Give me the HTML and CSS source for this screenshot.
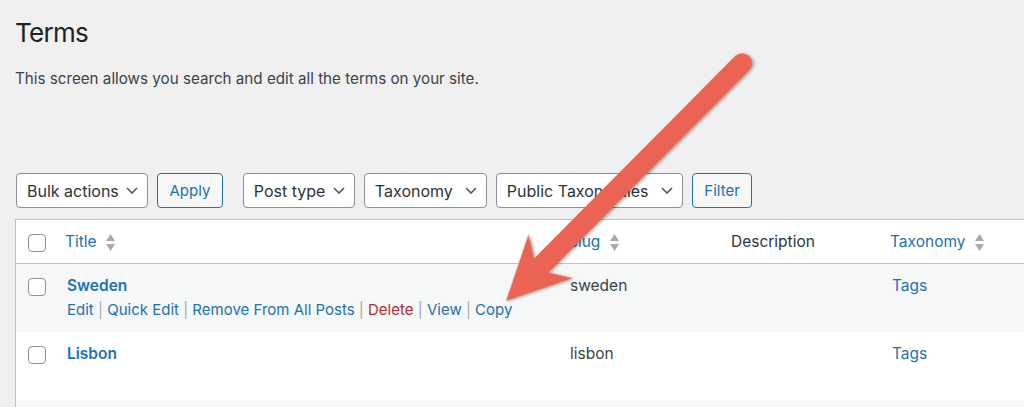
FILE: index.html
```html
<!DOCTYPE html>
<html lang="en">
<head>
    <meta charset="UTF-8">
    <meta name="viewport" content="width=device-width, initial-scale=1.0">
    <title>Terms</title>
    <link rel="stylesheet" href="styles.css">
</head>
<body>
    <div class="wrap">
        <h1>Terms</h1>
        <p class="intro">This screen allows you search and edit all the terms on your site.</p>

        <div class="tablenav">
            <div class="actions">
                <div class="select select-bulk">
                    <span>Bulk actions</span>
                    <svg class="chevron" width="12" height="7" viewBox="0 0 12 7"><path d="M1 1l5 5 5-5"/></svg>
                </div>
                <button class="button">Apply</button>
            </div>
            <div class="actions">
                <div class="select select-post">
                    <span>Post type</span>
                    <svg class="chevron" width="12" height="7" viewBox="0 0 12 7"><path d="M1 1l5 5 5-5"/></svg>
                </div>
                <div class="select select-tax">
                    <span>Taxonomy</span>
                    <svg class="chevron" width="12" height="7" viewBox="0 0 12 7"><path d="M1 1l5 5 5-5"/></svg>
                </div>
                <div class="select select-public">
                    <span>Public Taxonomies</span>
                    <svg class="chevron" width="12" height="7" viewBox="0 0 12 7"><path d="M1 1l5 5 5-5"/></svg>
                </div>
                <button class="button">Filter</button>
            </div>
        </div>

        <table class="terms-table">
            <thead>
                <tr>
                    <th class="check-column"><span class="checkbox"></span></th>
                    <th class="col-title">
                        <a href="#">Title</a>
                        <svg class="sort" width="9" height="17" viewBox="0 0 9 17"><path d="M0 7L4.5 0 9 7z M0 10h9l-4.5 7z"/></svg>
                    </th>
                    <th class="col-slug">
                        <a href="#">Slug</a>
                        <svg class="sort" width="9" height="17" viewBox="0 0 9 17"><path d="M0 7L4.5 0 9 7z M0 10h9l-4.5 7z"/></svg>
                    </th>
                    <th class="col-desc">Description</th>
                    <th class="col-tax">
                        <a href="#">Taxonomy</a>
                        <svg class="sort" width="9" height="17" viewBox="0 0 9 17"><path d="M0 7L4.5 0 9 7z M0 10h9l-4.5 7z"/></svg>
                    </th>
                </tr>
            </thead>
            <tbody>
                <tr class="alternate">
                    <td class="check-column"><span class="checkbox"></span></td>
                    <td>
                        <a class="row-title" href="#">Sweden</a>
                        <div class="row-actions">
                            <a href="#">Edit</a> <span class="sep">|</span>
                            <a href="#">Quick Edit</a> <span class="sep">|</span>
                            <a href="#">Remove From All Posts</a> <span class="sep">|</span>
                            <a class="delete" href="#">Delete</a> <span class="sep">|</span>
                            <a href="#">View</a> <span class="sep">|</span>
                            <a href="#">Copy</a>
                        </div>
                    </td>
                    <td>sweden</td>
                    <td></td>
                    <td><a href="#">Tags</a></td>
                </tr>
                <tr>
                    <td class="check-column"><span class="checkbox"></span></td>
                    <td>
                        <a class="row-title" href="#">Lisbon</a>
                        <div class="row-actions hidden">
                            <a href="#">Edit</a> <span class="sep">|</span>
                            <a href="#">Quick Edit</a>
                        </div>
                    </td>
                    <td>lisbon</td>
                    <td></td>
                    <td><a href="#">Tags</a></td>
                </tr>
                <tr class="alternate empty">
                    <td class="check-column"></td>
                    <td></td>
                    <td></td>
                    <td></td>
                    <td></td>
                </tr>
            </tbody>
        </table>
    </div>

    <!-- callout arrow pointing at the Copy action -->
    <svg class="callout" width="1024" height="407" viewBox="0 0 1024 407">
        <g class="arrow" transform="translate(506 301) rotate(-45.2)">
            <line x1="48" y1="0" x2="335" y2="0"/>
            <polygon points="0,0 63,-31 50,-10 50,10 63,31"/>
        </g>
    </svg>
</body>
</html>
```

FILE: styles.css
```css
body {
    margin: 0;
    position: relative;
    overflow: hidden;
    background-color: #f0f0f1;
    color: #3c434a;
    font-family: Inter, "Liberation Sans", sans-serif;
    font-size: 15px;
}
a {
    color: #2271b1;
    text-decoration: none;
}
.wrap {
    padding-left: 15px;
}
h1 {
    margin: 0;
    padding-top: 17px;
    font-size: 26px;
    line-height: 32px;
    font-weight: 400;
    letter-spacing: -0.7px;
    color: #1d2327;
}
.intro {
    margin: 20px 0 0;
    line-height: 20px;
    font-size: 15.2px;
}

/* filters above the table */
.tablenav {
    display: flex;
    margin-top: 84px;
    padding-left: 1px;
}
.actions {
    display: flex;
    gap: 9px;
}
.actions + .actions {
    margin-left: 20px;
}
.select {
    box-sizing: border-box;
    height: 35px;
    display: flex;
    align-items: center;
    justify-content: space-between;
    padding: 0 9px 0 10px;
    background-color: #fff;
    border: 1px solid #8c8f94;
    border-radius: 4px;
    color: #2c3338;
    font-size: 16px;
}
.select-bulk { width: 132px; }
.select-post { width: 112px; }
.select-tax { width: 123px; }
.select-public { width: 187px; }
.chevron {
    fill: none;
    stroke: #50575e;
    stroke-width: 1.6;
}
.button {
    box-sizing: border-box;
    height: 35px;
    padding: 0 11.5px;
    background-color: #f6f7f7;
    border: 1px solid #2271b1;
    border-radius: 4px;
    color: #2271b1;
    font-family: inherit;
    font-size: 15px;
}

/* list table */
.terms-table {
    margin-top: 11px;
    width: 1030px;
    table-layout: fixed;
    border-spacing: 0;
    background-color: #fff;
    border: 1px solid #c3c4c7;
    border-right: none;
    box-shadow: 0 1px 1px rgba(0, 0, 0, 0.04);
    font-size: 15.5px;
}
.terms-table th {
    box-sizing: border-box;
    height: 44px;
    padding: 0 10px;
    text-align: left;
    font-weight: 400;
    color: #2c3338;
    border-bottom: 1px solid #c3c4c7;
    white-space: nowrap;
}
.terms-table th a,
.terms-table th .sort {
    vertical-align: middle;
}
.sort {
    margin-left: 5px;
    fill: #a7aaad;
}
.terms-table td {
    padding: 10px 10px 10px 12px;
    line-height: 24px;
    vertical-align: top;
    white-space: nowrap;
}
.terms-table th.check-column,
.terms-table td.check-column {
    width: 39px;
    padding: 0 0 0 12px;
}
.col-title { width: 503px; }
.col-slug { width: 163px; }
.col-desc { width: 159px; }
.alternate td {
    background-color: #f6f7f7;
}
.empty td {
    height: 40px;
}
.checkbox {
    display: block;
    box-sizing: border-box;
    width: 18px;
    height: 18px;
    background-color: #fff;
    border: 1px solid #8c8f94;
    border-radius: 4px;
}
th .checkbox {
    margin-top: 2px;
}
td .checkbox {
    margin-top: 14px;
}
.row-title {
    font-weight: 600;
}
.row-actions {
    font-size: 15px;
}
.row-actions .sep {
    color: #a7aaad;
}
.row-actions .delete {
    color: #b32d2e;
}
.row-actions.hidden {
    visibility: hidden;
}

/* annotation layer */
.callout {
    position: absolute;
    left: 0;
    top: 0;
    pointer-events: none;
}
.arrow {
    fill: #eb6352;
    stroke: #eb6352;
    filter: drop-shadow(1px 2px 1.5px rgba(0, 0, 0, 0.3));
}
.arrow line {
    stroke-width: 20;
    stroke-linecap: round;
}
.arrow polygon {
    stroke: none;
}
```
